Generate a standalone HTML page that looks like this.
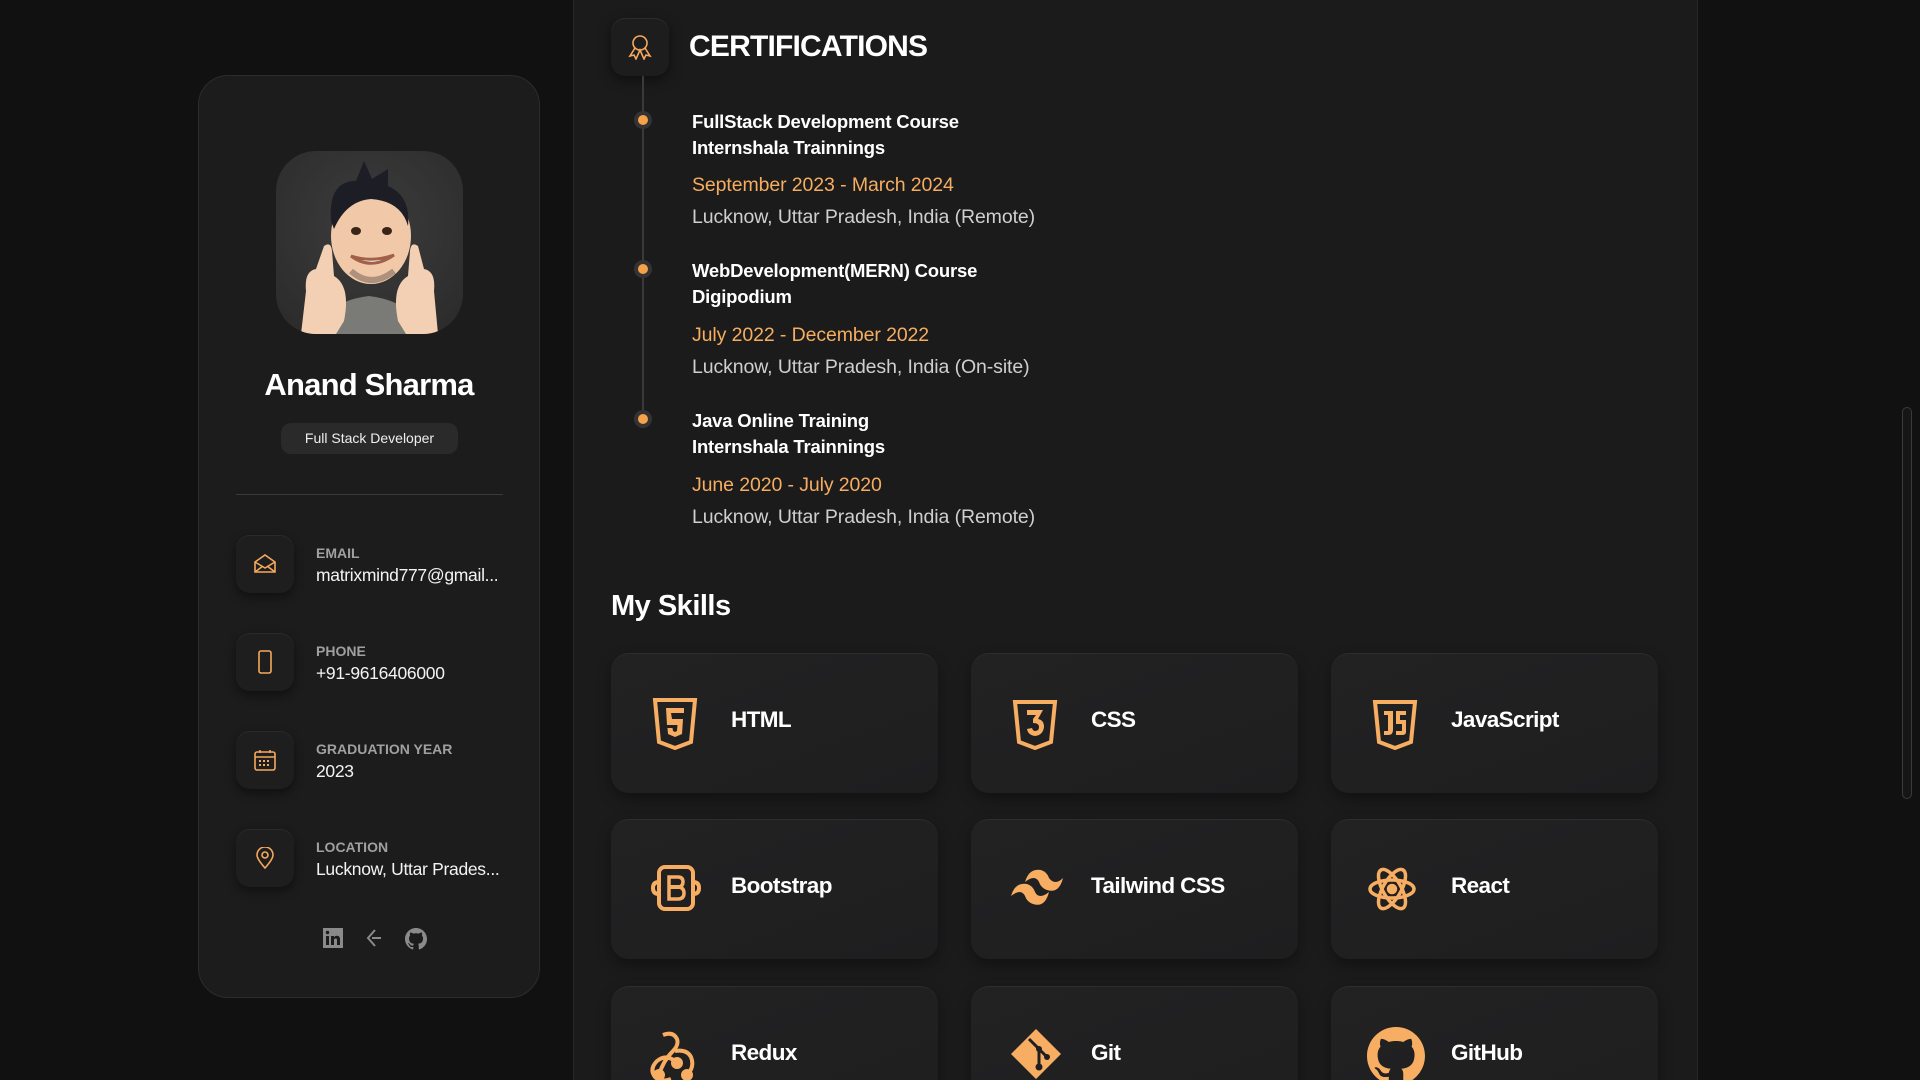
<!DOCTYPE html>
<html><head><meta charset="utf-8">
<style>
*{box-sizing:border-box;margin:0;padding:0}
html{width:1920px;height:1080px;overflow:hidden}
body{width:1920px;height:1080px;overflow:hidden;background:#111111;font-family:"Liberation Sans",sans-serif;color:#fff;position:relative}
.main{position:absolute;left:573px;top:0;width:1125px;height:1080px;background:#1b1b1b;border-left:1px solid #262626;border-right:1px solid #262626}
.card{position:absolute;left:198px;top:75px;width:342px;height:923px;background:#1c1c1c;border:1px solid #2c2c2c;border-radius:30px}
.avatar{position:absolute;left:77px;top:75px;width:187px;height:183px;border-radius:40px;background:radial-gradient(circle at 50% 40%,#3c3c3c,#2a2a2a);overflow:hidden}
.name{position:absolute;left:0;width:100%;top:291px;text-align:center;font-size:31px;font-weight:bold;letter-spacing:-0.8px}
.badge{position:absolute;left:82px;top:347px;width:177px;height:31px;border-radius:10px;background:#2a2a2a;font-size:14px;text-align:center;line-height:31px;color:#eee}
.div{position:absolute;left:37px;top:418px;width:267px;height:1px;background:#3a3a3a}
.row{position:absolute;left:37px;width:300px;height:60px}
.ib{position:absolute;left:0;top:0;width:58px;height:58px;border-radius:14px;background:#1e1e1e;box-shadow:0 4px 10px rgba(0,0,0,.45),inset 0 1px 0 #2a2a2a;display:flex;align-items:center;justify-content:center}
.lab{position:absolute;left:80px;top:10px;font-size:14px;color:#a0a0a0;font-weight:bold}
.val{position:absolute;left:80px;top:30px;font-size:17.5px;color:#f3f3f3;white-space:nowrap;letter-spacing:-0.3px}
.soc{position:absolute;top:852px}
.certbox{position:absolute;left:611px;top:18px;width:58px;height:58px;border-radius:14px;background:#1d1d1d;box-shadow:0 4px 12px rgba(0,0,0,.5),inset 0 1px 0 #2c2c2c;display:flex;align-items:center;justify-content:center}
.h1{position:absolute;left:689px;top:30px;font-size:30px;font-weight:bold;letter-spacing:-0.8px}
.line{position:absolute;left:642px;top:76px;width:2px;height:350px;background:#3a3a3a}
.dot{position:absolute;left:634px;width:18px;height:18px;border-radius:50%;background:#333;display:flex;align-items:center;justify-content:center}
.dot i{width:10px;height:10px;border-radius:50%;background:#f6a248}
.ct{position:absolute;left:692px;font-size:18.5px;font-weight:bold;line-height:26px;letter-spacing:-0.2px}
.cd{position:absolute;left:692px;font-size:19.5px;color:#f6ad60;letter-spacing:-0.1px}
.cl{position:absolute;left:692px;font-size:19.5px;color:#cfcfcf;letter-spacing:-0.1px}
.h2{position:absolute;left:611px;top:590px;font-size:29px;font-weight:bold;letter-spacing:-0.5px}
.sk{position:absolute;width:327px;height:140px;border-radius:18px;background:linear-gradient(160deg,#222223,#1e1e1f);border-top:1px solid #2e2e2e;box-shadow:0 6px 14px rgba(0,0,0,.35)}
.sk svg{position:absolute;left:40px;top:44px}
.sk span{position:absolute;left:120px;top:53px;font-size:22.5px;font-weight:bold;letter-spacing:-0.6px}
.sb{position:absolute;left:1902px;top:407px;width:10px;height:392px;border-radius:5px;border:1px solid #3a3a3a;background:#161616}
</style></head><body>
<div class="card">
 <div class="avatar">
  <svg width="187" height="183" viewBox="0 0 187 183">
   <path d="M40 183 Q50 150 93 145 Q136 150 148 183Z" fill="#7a7a76"/>
   <ellipse cx="95" cy="85" rx="40" ry="48" fill="#f1c9a8"/>
   <path d="M55 70 Q52 30 80 30 L88 10 L96 28 L112 18 L112 35 Q135 45 132 75 Q125 50 95 48 Q70 50 58 78Z" fill="#1d1d26"/>
   <ellipse cx="80" cy="80" rx="5" ry="4" fill="#3a2418"/><ellipse cx="111" cy="80" rx="5" ry="4" fill="#3a2418"/>
   <path d="M75 105 Q95 120 118 104 Q96 112 75 105Z" fill="#fff" stroke="#a0604a" stroke-width="3"/>
   <path d="M75 120 Q95 138 118 120" stroke="#6a5a52" stroke-width="6" fill="none" opacity=".5"/>
   <path d="M25 183 L30 140 Q28 120 40 118 L48 95 Q55 90 56 100 L58 125 Q75 135 68 170 L60 183Z" fill="#f3d0b3"/>
   <path d="M162 183 L158 140 Q160 120 148 118 L142 95 Q135 90 134 100 L132 125 Q115 135 122 170 L130 183Z" fill="#f3d0b3"/>
  </svg>
 </div>
 <div class="name">Anand Sharma</div>
 <div class="badge">Full Stack Developer</div>
 <div class="div"></div>
 <div class="row" style="top:459px"><div class="ib"><svg width="22" height="20" viewBox="0 0 22 20" fill="none" stroke="#f6a95c" stroke-width="1.6"><path d="M1 8 L11 1 L21 8 V18 H1Z"/><path d="M1 8 L11 14 L21 8M1 18 L9 12M21 18 L13 12"/></svg></div><div class="lab">EMAIL</div><div class="val">matrixmind777@gmail...</div></div>
 <div class="row" style="top:557px"><div class="ib"><svg width="14" height="24" viewBox="0 0 14 24" fill="none" stroke="#f6a95c" stroke-width="1.6"><rect x="1" y="1" width="12" height="22" rx="2"/></svg></div><div class="lab">PHONE</div><div class="val">+91-9616406000</div></div>
 <div class="row" style="top:655px"><div class="ib"><svg width="22" height="22" viewBox="0 0 22 22" fill="none" stroke="#f6a95c" stroke-width="1.6"><rect x="1" y="3" width="20" height="18" rx="2"/><path d="M1 8H21M6 1V4M16 1V4"/><path d="M5 12h2M9 12h2M13 12h2M5 16h2M9 16h2M13 16h2" stroke-width="2"/></svg></div><div class="lab">GRADUATION YEAR</div><div class="val">2023</div></div>
 <div class="row" style="top:753px"><div class="ib"><svg width="18" height="22" viewBox="0 0 18 22" fill="none" stroke="#f6a95c" stroke-width="1.6"><path d="M9 21 Q1 12 1 8 A8 8 0 0 1 17 8 Q17 12 9 21Z"/><circle cx="9" cy="8" r="3"/></svg></div><div class="lab">LOCATION</div><div class="val">Lucknow, Uttar Prades...</div></div>
 <svg class="soc" style="left:124px" width="20" height="20" viewBox="0 0 20 20"><rect width="20" height="20" fill="#8a8a8a"/><rect x="3" y="8" width="3" height="9" fill="#1c1c1c"/><circle cx="4.5" cy="4.5" r="1.7" fill="#1c1c1c"/><path d="M8 8h3v1.5Q12 7.5 14.5 7.8Q17 8.2 17 11.5V17H14V12Q14 10.5 12.7 10.5Q11 10.5 11 12V17H8Z" fill="#1c1c1c"/></svg>
 <svg class="soc" style="left:166px" width="18" height="20" viewBox="0 0 18 20" fill="none" stroke="#8a8a8a" stroke-width="2"><path d="M10 2 L3 10 L10 18M7 10H16"/></svg>
 <svg class="soc" style="left:206px" width="22" height="22" viewBox="0 0 16 16"><path fill="#8a8a8a" d="M8 0C3.58 0 0 3.58 0 8c0 3.54 2.29 6.53 5.47 7.59.4.07.55-.17.55-.38 0-.19-.01-.82-.01-1.49-2.01.37-2.53-.49-2.69-.94-.09-.23-.48-.94-.82-1.13-.28-.15-.68-.52-.01-.53.63-.01 1.08.58 1.23.82.72 1.21 1.87.87 2.33.66.07-.52.28-.87.51-1.07-1.78-.2-3.64-.89-3.64-3.95 0-.87.31-1.59.82-2.15-.08-.2-.36-1.02.08-2.12 0 0 .67-.21 2.2.82.64-.18 1.32-.27 2-.27.68 0 1.36.09 2 .27 1.53-1.04 2.2-.82 2.2-.82.44 1.1.16 1.92.08 2.12.51.56.82 1.27.82 2.15 0 3.07-1.87 3.75-3.65 3.95.29.25.54.73.54 1.48 0 1.07-.01 1.93-.01 2.2 0 .21.15.46.55.38A8.013 8.013 0 0016 8c0-4.42-3.58-8-8-8z"/></svg>
</div>

<div class="main"></div>
<div class="certbox"><svg width="24" height="26" viewBox="0 0 24 26" fill="none" stroke="#f6a95c" stroke-width="1.6"><circle cx="12" cy="9" r="7"/><path d="M7 14 L2 22 L6 21 L8 25 L12 16 L16 25 L18 21 L22 22 L17 14"/></svg></div>
<div class="h1">CERTIFICATIONS</div>
<div class="line"></div>
<div class="dot" style="top:111px"><i></i></div>
<div class="dot" style="top:260px"><i></i></div>
<div class="dot" style="top:410px"><i></i></div>
<div class="ct" style="top:109px">FullStack Development Course<br>Internshala Trainnings</div>
<div class="cd" style="top:174px">September 2023 - March 2024</div>
<div class="cl" style="top:206px">Lucknow, Uttar Pradesh, India (Remote)</div>
<div class="ct" style="top:258px">WebDevelopment(MERN) Course<br>Digipodium</div>
<div class="cd" style="top:324px">July 2022 - December 2022</div>
<div class="cl" style="top:356px">Lucknow, Uttar Pradesh, India (On-site)</div>
<div class="ct" style="top:408px">Java Online Training<br>Internshala Trainnings</div>
<div class="cd" style="top:474px">June 2020 - July 2020</div>
<div class="cl" style="top:506px">Lucknow, Uttar Pradesh, India (Remote)</div>

<div class="h2">My Skills</div>

<div class="sk" style="left:611px;top:653px"><svg width="48" height="52" viewBox="0 0 48 52"><path d="M4 2H44L40 44L24 50L8 44Z" fill="none" stroke="#f8ae62" stroke-width="4"/><path d="M15 10H33V15H20L21 21H32L31 36L24 39L17 36L16.5 30H21.5L22 33L24 34L26 33L26.5 27H16Z" fill="#f8ae62"/></svg><span>HTML</span></div>
<div class="sk" style="left:971px;top:653px"><svg width="48" height="52" viewBox="0 0 48 52"><path d="M4 4H44L40 44L24 50L8 44Z" fill="none" stroke="#f8ae62" stroke-width="4"/><path d="M16 12H32L27 21Q33 22 33 29Q32 37 24 38Q17 37 16 31L21 30Q22 33 24 33Q28 33 28 29Q28 25 22 25V21L25 17H16Z" fill="#f8ae62"/></svg><span>CSS</span></div>
<div class="sk" style="left:1331px;top:653px"><svg width="48" height="52" viewBox="0 0 48 52"><path d="M4 4H44L40 44L24 50L8 44Z" fill="none" stroke="#f8ae62" stroke-width="4"/><path d="M13 13H22V32Q22 37 17 37H13V33H17V17H13Z M25 13H35V17H29V22H35V34Q35 37 31 37H25V33H31V26H25Z" fill="#f8ae62"/></svg><span>JavaScript</span></div>
<div class="sk" style="left:611px;top:819px"><svg width="50" height="48" viewBox="0 0 50 48" fill="none" stroke="#f8ae62" stroke-width="4"><rect x="8" y="3" width="34" height="42" rx="6"/><path d="M8 18 Q2 18 2 24 Q2 30 8 30M42 18Q48 18 48 24Q48 30 42 30"/><path d="M18 13H27Q32 13 32 18Q32 22 28 23Q33 24 33 29Q33 35 27 35H18Z" stroke-width="3.5"/><path d="M18 23H28"/></svg><span>Bootstrap</span></div>
<div class="sk" style="left:971px;top:819px"><svg width="56" height="44" viewBox="0 0 56 44" style="left:38px;top:46px"><path d="M16 16Q20 2 32 4Q38 6 40 12Q46 20 54 12Q50 28 38 24Q32 22 30 16Q26 8 16 16Z M2 30Q6 16 18 18Q24 20 26 26Q30 34 40 26Q36 42 24 38Q18 36 16 30Q12 22 2 30Z" fill="#f8ae62"/></svg><span>Tailwind CSS</span></div>
<div class="sk" style="left:1331px;top:819px"><svg width="50" height="50" viewBox="0 0 50 50" fill="none" stroke="#f8ae62" stroke-width="3.5" style="left:36px"><ellipse cx="25" cy="25" rx="22" ry="9"/><ellipse cx="25" cy="25" rx="22" ry="9" transform="rotate(60 25 25)"/><ellipse cx="25" cy="25" rx="22" ry="9" transform="rotate(120 25 25)"/><circle cx="25" cy="25" r="3.5" fill="#f8ae62"/></svg><span>React</span></div>
<div class="sk" style="left:611px;top:986px"><svg width="50" height="52" viewBox="0 0 50 52" fill="none" stroke="#f8ae62" stroke-width="4" style="left:36px"><circle cx="30" cy="32" r="4" fill="#f8ae62"/><circle cx="12" cy="44" r="4" fill="#f8ae62"/><circle cx="40" cy="44" r="4" fill="#f8ae62"/><path d="M16 4Q26 0 30 8Q32 14 26 20Q16 30 12 44M30 32Q20 22 10 30Q2 38 8 46Q14 52 24 48M40 44Q48 36 44 26Q40 18 28 20"/></svg><span>Redux</span></div>
<div class="sk" style="left:971px;top:986px"><svg width="54" height="54" viewBox="0 0 54 54" style="left:38px;top:40px"><path d="M27 2L52 27L27 52L2 27Z" fill="#f8ae62"/><path d="M20 12L30 22V40M30 22L38 30" stroke="#1f1f1f" stroke-width="3" fill="none"/><circle cx="30" cy="22" r="3" fill="#1f1f1f"/><circle cx="30" cy="40" r="3.5" fill="#1f1f1f"/><circle cx="38" cy="30" r="3" fill="#1f1f1f"/></svg><span>Git</span></div>
<div class="sk" style="left:1331px;top:986px"><svg width="58" height="58" viewBox="0 0 16 16" style="left:36px;top:40px"><path fill="#f8ae62" d="M8 0C3.58 0 0 3.58 0 8c0 3.54 2.29 6.53 5.47 7.59.4.07.55-.17.55-.38 0-.19-.01-.82-.01-1.49-2.01.37-2.53-.49-2.69-.94-.09-.23-.48-.94-.82-1.13-.28-.15-.68-.52-.01-.53.63-.01 1.08.58 1.23.82.72 1.21 1.87.87 2.33.66.07-.52.28-.87.51-1.07-1.78-.2-3.64-.89-3.64-3.95 0-.87.31-1.59.82-2.15-.08-.2-.36-1.02.08-2.12 0 0 .67-.21 2.2.82.64-.18 1.32-.27 2-.27.68 0 1.36.09 2 .27 1.53-1.04 2.2-.82 2.2-.82.44 1.1.16 1.920.08 2.12.51.56.82 1.27.82 2.15 0 3.07-1.87 3.75-3.65 3.95.29.25.54.73.54 1.48 0 1.07-.01 1.93-.01 2.2 0 .21.15.46.55.38A8.013 8.013 0 0016 8c0-4.42-3.58-8-8-8z"/></svg><span>GitHub</span></div>
<div class="sb"></div>
</body></html>
